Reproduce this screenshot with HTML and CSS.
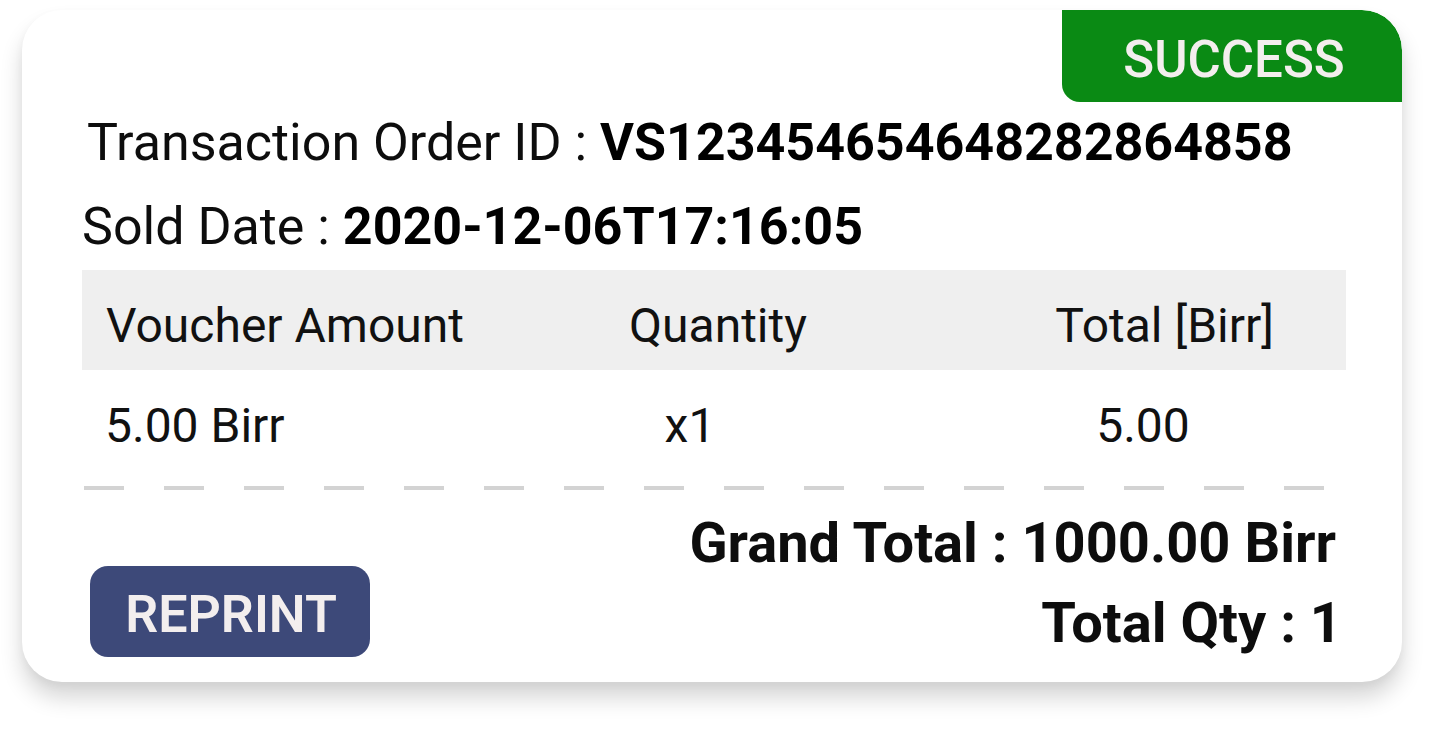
FILE: index.html
```html
<!DOCTYPE html>
<html lang="en">
<head>
<meta charset="utf-8">
<title>Transaction</title>
<link rel="stylesheet" href="styles.css">
</head>
<body>
<div class="card">
  <div class="badge-row"><div class="badge">SUCCESS</div></div>
  <div class="line line-order">Transaction Order ID : <b>VS123454654648282864858</b></div>
  <div class="line line-date">Sold Date : <b>2020-12-06T17:16:05</b></div>
  <div class="table">
    <div class="thead">
      <div class="cell c1">Voucher Amount</div>
      <div class="cell c2">Quantity</div>
      <div class="cell c3">Total [Birr]</div>
    </div>
    <div class="trow">
      <div class="cell d1">5.00 Birr</div>
      <div class="cell d2">x1</div>
      <div class="cell d3">5.00</div>
    </div>
  </div>
  <div class="dashes"></div>
  <div class="footer">
    <button class="reprint">REPRINT</button>
    <div class="totals">
      <div class="grand">Grand Total : 1000.00 Birr</div>
      <div class="qty">Total Qty : 1</div>
    </div>
  </div>
</div>
</body>
</html>
```
FILE: styles.css
```css
html, body {
  margin: 0;
  padding: 0;
  background: #ffffff;
}
body {
  min-height: 732px;
  padding-top: 10px;
  box-sizing: border-box;
  font-family: Roboto, "Liberation Sans", sans-serif;
  color: #111111;
}
.card {
  box-sizing: border-box;
  margin: 0 0 0 22px;
  width: 1380px;
  height: 672px;
  background: #ffffff;
  border-radius: 40px;
  box-shadow: 0 16px 22px rgba(0, 0, 0, 0.16), 0 4px 10px rgba(0, 0, 0, 0.04);
  overflow: hidden;
}
.badge-row {
  display: flex;
  justify-content: flex-end;
}
.badge {
  box-sizing: border-box;
  width: 340px;
  height: 92px;
  padding: 8px 0 0 4px;
  background: #0a8a14;
  color: #f3eeee;
  border-radius: 0 40px 0 18px;
  font-size: 51px;
  font-weight: 500;
  line-height: 84px;
  text-align: center;
}
.line {
  font-size: 52px;
  line-height: 60px;
  color: #0d0d0d;
}
.line b {
  font-weight: 700;
  color: #000;
}
.line-order {
  margin-top: 11px;
  padding-left: 65px;
}
.line-date {
  margin-top: 24px;
  padding-left: 60px;
}
.table {
  margin: 13px 56px 0 60px;
}
.thead, .trow {
  display: grid;
  grid-template-columns: 420px 432px 1fr;
  font-size: 48px;
  line-height: 56px;
}
.thead {
  background: #efefef;
  padding: 28px 0 16px;
}
.trow {
  padding: 28px 0 32px;
}
.c1 { padding-left: 24px; }
.c2 { text-align: center; }
.c3 { text-align: right; padding-right: 72px; }
.d1 { padding-left: 23px; }
.d2 { text-align: center; padding-right: 56px; }
.d3 { text-align: center; padding-left: 6px; }
.dashes {
  margin-left: 62px;
  width: 1240px;
  height: 4px;
  background: repeating-linear-gradient(to right, #d3d3d3 0, #d3d3d3 40px, transparent 40px, transparent 80px);
}
.footer {
  display: flex;
  justify-content: space-between;
  align-items: flex-start;
  margin-top: 13px;
  padding: 0 60px 0 68px;
}
.reprint {
  box-sizing: border-box;
  margin-top: 63px;
  width: 280px;
  height: 91px;
  border: none;
  border-radius: 18px;
  background: #3d4979;
  color: #f3eeee;
  font-family: Roboto, "Liberation Sans", sans-serif;
  font-size: 52px;
  font-weight: 600;
  padding: 6px 0 0 2px;
}
.totals {
  text-align: right;
  font-size: 56px;
  font-weight: 700;
  line-height: 80px;
  color: #0d0d0d;
}
.grand {
  margin-right: 6px;
}
```
